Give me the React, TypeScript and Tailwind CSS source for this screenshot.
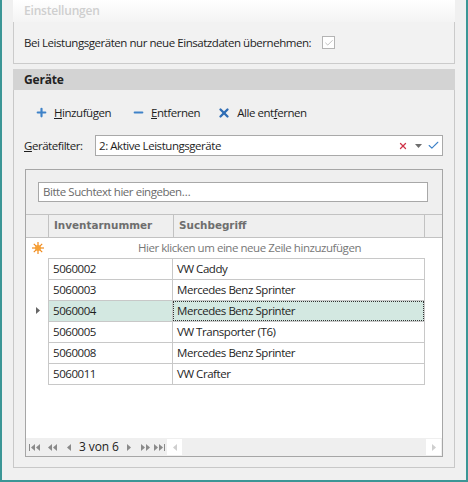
import { Plus, Minus, X, Check } from 'lucide-react';

const rows = [
  { nr: '5060002', name: 'VW Caddy' },
  { nr: '5060003', name: 'Mercedes Benz Sprinter' },
  { nr: '5060004', name: 'Mercedes Benz Sprinter', selected: true },
  { nr: '5060005', name: 'VW Transporter (T6)' },
  { nr: '5060008', name: 'Mercedes Benz Sprinter' },
  { nr: '5060011', name: 'VW Crafter' },
];

function Tri({ dir, className = '' }: { dir: 'l' | 'r' | 'd'; className?: string }) {
  const d = dir === 'l' ? 'M4 0 L4 7 L0 3.5 Z' : dir === 'r' ? 'M0 0 L0 7 L4 3.5 Z' : 'M0 0 L7 0 L3.5 4 Z';
  const w = dir === 'd' ? 7 : 4;
  const h = dir === 'd' ? 4 : 7;
  return (
    <svg width={w} height={h} viewBox={`0 0 ${w} ${h}`} className={className}>
      <path d={d} fill="currentColor" />
    </svg>
  );
}

function NavButtons() {
  return (
    <div className="flex items-center text-[#8a8a8a] h-full">
      <span className="flex items-center gap-[1px] w-[18px] ml-[3px]">
        <span className="w-[1px] h-[7px] bg-current" />
        <Tri dir="l" />
        <Tri dir="l" />
      </span>
      <span className="flex items-center gap-[1px] w-[17px] ml-[1px]">
        <Tri dir="l" />
        <Tri dir="l" />
      </span>
      <span className="flex items-center w-[12px] ml-[2px]">
        <Tri dir="l" />
      </span>
      <span className="w-[48px] text-[12px] tracking-[-0.1px] text-[#222]">3 von 6</span>
      <span className="flex items-center w-[14px]">
        <Tri dir="r" />
      </span>
      <span className="flex items-center gap-[1px] w-[13px]">
        <Tri dir="r" />
        <Tri dir="r" />
      </span>
      <span className="flex items-center gap-[1px] w-[12px]">
        <Tri dir="r" />
        <Tri dir="r" />
        <span className="w-[1px] h-[7px] bg-current" />
      </span>
    </div>
  );
}

export default function App() {
  return (
    <div className="relative w-[468px] h-[482px] bg-[#f0f0f0] border-l-2 border-r-2 border-b-2 border-[#3b9696] font-['Segoe_UI','Open_Sans',sans-serif] text-[11.5px] tracking-[-0.45px] text-[#1e1e1e] overflow-hidden">
      <div className="pl-[11px] pr-[11px] flex flex-col">
        {/* Einstellungen */}
        <div className="h-[22px] flex items-center pl-[11px] bg-gradient-to-b from-white to-[#f4f4f4] font-semibold text-[12px] tracking-[-0.2px] text-[#cfcfcf]">
          Einstellungen
        </div>
        <div className="h-[42px] border border-t-0 border-[#cbcbcb] bg-[#f2f2f2] flex items-center pl-[10px] gap-[11px]">
          <span>Bei Leistungsgeräten nur neue Einsatzdaten übernehmen:</span>
          <span className="w-[13px] h-[13px] border border-[#b4b4b4] bg-white flex items-center justify-center">
            <Check size={10} strokeWidth={1.5} className="text-[#9a9a9a]" />
          </span>
        </div>

        {/* Geräte */}
        <div className="mt-[5px] h-[21px] bg-[#d3d3d3] flex items-center pl-[11px] font-bold text-[12px] tracking-[-0.2px] text-[#222]">
          Geräte
        </div>
        <div className="h-[378px] border border-t-0 border-[#c8c8c8] px-[11px] flex flex-col">
          <div className="h-[40px] flex items-center pt-[5px] pl-[10px]">
            <span className="flex items-center gap-[6px]">
              <Plus size={13} strokeWidth={4} className="text-[#3e82c8]" />
              <span>
                <u>H</u>inzufügen
              </span>
            </span>
            <span className="flex items-center gap-[6px] ml-[21px]">
              <Minus size={13} strokeWidth={4} className="text-[#3e82c8]" />
              <span>
                <u>E</u>ntfernen
              </span>
            </span>
            <span className="flex items-center gap-[6px] ml-[17px]">
              <X size={14} strokeWidth={4} className="text-[#2f6db5]" />
              <span>
                Alle ent<u>f</u>ernen
              </span>
            </span>
          </div>

          <div className="flex items-center h-[21px] mt-[5px]">
            <span className="w-[71px] -ml-[1px]">
              <u>G</u>erätefilter:
            </span>
            <div className="flex-1 h-[21px] border border-[#a9a9a9] bg-white flex items-center pl-[3px] pr-[2px]">
              <span className="flex-1">2: Aktive Leistungsgeräte</span>
              <X size={10} strokeWidth={3} className="text-[#d0354a]" />
              <Tri dir="d" className="ml-[7px] text-[#6e6e6e]" />
              <Check size={13} strokeWidth={2} className="ml-[5px] text-[#3e82c8]" />
            </div>
          </div>

          {/* Grid */}
          <div className="mt-[13px] h-[288px] border border-[#a6a6a6] bg-white flex flex-col">
            <div className="h-[44px] bg-[#efefef] pt-[12px] pl-[12px] pr-[14px]">
              <div className="h-[20px] border border-[#a8a8a8] bg-white flex items-center pl-[4px] text-[#6a6a6a]">
                Bitte Suchtext hier eingeben…
              </div>
            </div>
            <div className="h-[24px] flex border-y border-[#c2c2c2] bg-[#efefef] font-['Tahoma','DejaVu_Sans',sans-serif] font-bold text-[10.4px] tracking-normal text-[#6e6e6e]">
              <div className="w-[23px] border-r border-[#c2c2c2]" />
              <div className="w-[125px] border-r border-[#c2c2c2] flex items-center pl-[5px]">Inventarnummer</div>
              <div className="w-[251px] border-r border-[#c2c2c2] flex items-center pl-[5px]">Suchbegriff</div>
              <div className="flex-1" />
            </div>
            <div className="flex-1 flex flex-col">
              <div className="h-[20px] flex items-center">
                <div className="w-[23px] flex items-center justify-center">
                  <svg width="12" height="12" viewBox="0 0 12 12">
                    <g stroke="#f08a1c" strokeWidth="1.2">
                      <line x1="6" y1="0" x2="6" y2="12" />
                      <line x1="0" y1="6" x2="12" y2="6" />
                      <line x1="1.8" y1="1.8" x2="10.2" y2="10.2" />
                      <line x1="10.2" y1="1.8" x2="1.8" y2="10.2" />
                    </g>
                    <circle cx="6" cy="6" r="3" fill="#f6a035" />
                  </svg>
                </div>
                <div className="flex-1 text-center pl-[8px] text-[#777]">Hier klicken um eine neue Zeile hinzuzufügen</div>
              </div>
              <div className="ml-[22px] w-[377px] border-t border-[#c8c8c8]">
                {rows.map((r) => (
                  <div
                    key={r.nr}
                    className={`relative h-[21px] flex border-b border-l border-r border-[#c8c8c8] ${
                      r.selected ? 'bg-[#d3e8e1]' : 'bg-white'
                    }`}
                  >
                    {r.selected && (
                      <Tri dir="r" className="absolute left-[-13px] top-[6px] text-[#666]" />
                    )}
                    <div className="w-[124px] border-r border-[#c8c8c8] flex items-center pl-[4px]">{r.nr}</div>
                    <div
                      className={`flex-1 flex items-center pl-[4px] ${
                        r.selected ? 'outline outline-1 outline-dotted outline-[#333] -outline-offset-1' : ''
                      }`}
                    >
                      {r.name}
                    </div>
                  </div>
                ))}
              </div>
            </div>
            <div className="h-[18px] bg-[#efefef] flex items-center">
              <NavButtons />
              <div className="flex-1 h-full flex items-center justify-between pr-[1px]">
                <span className="ml-[1px] w-[15px] h-[16px] bg-white flex items-center justify-center text-[#cfcfcf]">
                  <Tri dir="l" />
                </span>
                <span className="w-[15px] h-[16px] bg-white flex items-center justify-center text-[#cfcfcf]">
                  <Tri dir="r" />
                </span>
              </div>
            </div>
          </div>
        </div>
      </div>
    </div>
  );
}
